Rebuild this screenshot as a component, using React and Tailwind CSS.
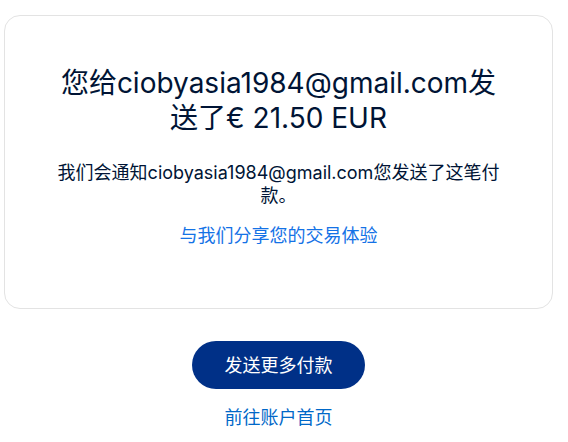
export default function App() {
  return (
    <div className="w-[568px] h-[442px] bg-white flex flex-col items-center pl-[4px] pr-[15px] pt-[15px]" style={{ fontFamily: '"Inter", "Noto Sans CJK SC", sans-serif' }}>
      <div className="w-full h-[294px] border border-[#e3e3e3] rounded-[16px] flex flex-col items-center px-[46px] pt-[50px] text-center">
        <h1 className="text-[28px] leading-[35px] text-[#001435] font-normal">您给ciobyasia1984@gmail.com发送了€ 21.50 EUR</h1>
        <p className="mt-[25px] text-[18px] leading-[23px] text-[#001435]">我们会通知ciobyasia1984@gmail.com您发送了这笔付款。</p>
        <a className="mt-[17px] text-[18px] leading-[24px] text-[#1472e6]">与我们分享您的交易体验</a>
      </div>
      <button className="mt-[32px] w-[173px] h-[48px] rounded-full bg-[#003087] text-white text-[18px]">发送更多付款</button>
      <a className="mt-[17px] text-[18px] leading-[24px] text-[#0068c8]">前往账户首页</a>
    </div>
  );
}
